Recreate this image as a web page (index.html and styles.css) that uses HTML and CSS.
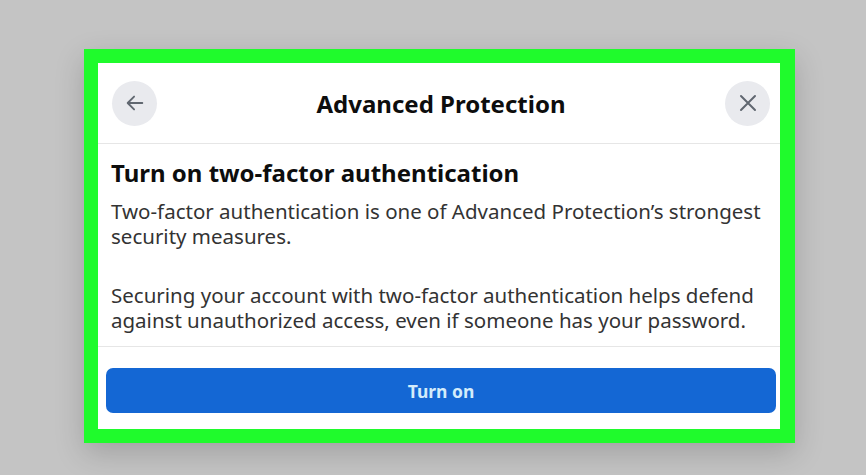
FILE: index.html
```html
<!DOCTYPE html>
<html lang="en">
<head>
<meta charset="utf-8">
<title>Advanced Protection</title>
<link rel="stylesheet" href="styles.css">
</head>
<body>
<div class="frame">
  <div class="dialog">
    <div class="header">
      <button class="circle-btn" aria-label="Back">
        <svg width="22" height="22" viewBox="0 0 24 24"><path d="M20 12H5M11 5l-7 7 7 7" fill="none" stroke="#606770" stroke-width="2" stroke-linecap="round" stroke-linejoin="round"/></svg>
      </button>
      <h1 class="title">Advanced Protection</h1>
      <button class="circle-btn" aria-label="Close">
        <svg width="24" height="24" viewBox="0 0 24 24"><path d="M5 5l14 14M19 5L5 19" fill="none" stroke="#606770" stroke-width="2" stroke-linecap="round"/></svg>
      </button>
    </div>
    <div class="content">
      <h2 class="heading">Turn on two-factor authentication</h2>
      <p class="text">Two-factor authentication is one of Advanced Protection’s strongest security measures.</p>
      <p class="text">Securing your account with two-factor authentication helps defend against unauthorized access, even if someone has your password.</p>
    </div>
    <div class="footer">
      <button class="primary">Turn on</button>
    </div>
  </div>
</div>
</body>
</html>
```
FILE: styles.css
```css
html, body {
  margin: 0;
  padding: 0;
}
body {
  background: #c4c4c4;
  width: 866px;
  height: 475px;
  overflow: hidden;
  font-family: "Noto Sans", "Open Sans", sans-serif;
}
.frame {
  margin: 49px 0 0 84px;
  width: 682px;
  height: 366px;
  border: 14px solid #1ffb2c;
  border-right-width: 15px;
  background: #ffffff;
  box-shadow: 0 10px 28px rgba(0, 0, 0, 0.18);
}
.dialog {
  display: flex;
  flex-direction: column;
  height: 100%;
}
.header {
  height: 80px;
  border-bottom: 1px solid #e6e6e6;
  display: flex;
  align-items: center;
  justify-content: space-between;
  padding: 0 10px 0 14px;
}
.circle-btn {
  width: 45px;
  height: 45px;
  border-radius: 50%;
  border: none;
  background: #e9eaee;
  display: flex;
  align-items: center;
  justify-content: center;
  padding: 0;
}
.title {
  margin: 0;
  font-size: 24px;
  font-weight: 700;
  color: #0d0d0d;
}
.content {
  padding: 14px 2px 0 13px;
  border-bottom: 1px solid #e6e6e6;
  height: 188px;
}
.heading {
  margin: 0 0 11px;
  font-size: 24px;
  font-weight: 700;
  color: #0d0d0d;
  line-height: 30px;
}
.text {
  margin: 0 0 34px;
  font-size: 20.5px;
  line-height: 25px;
  color: #333;
}
.footer {
  padding: 21px 4px 0 8px;
}
.primary {
  width: 100%;
  height: 45px;
  border: none;
  border-radius: 7px;
  background: #1467d4;
  color: #d3ecfb;
  font-family: "Noto Sans", "Open Sans", sans-serif;
  font-size: 17.5px;
  font-weight: 700;
}
```
